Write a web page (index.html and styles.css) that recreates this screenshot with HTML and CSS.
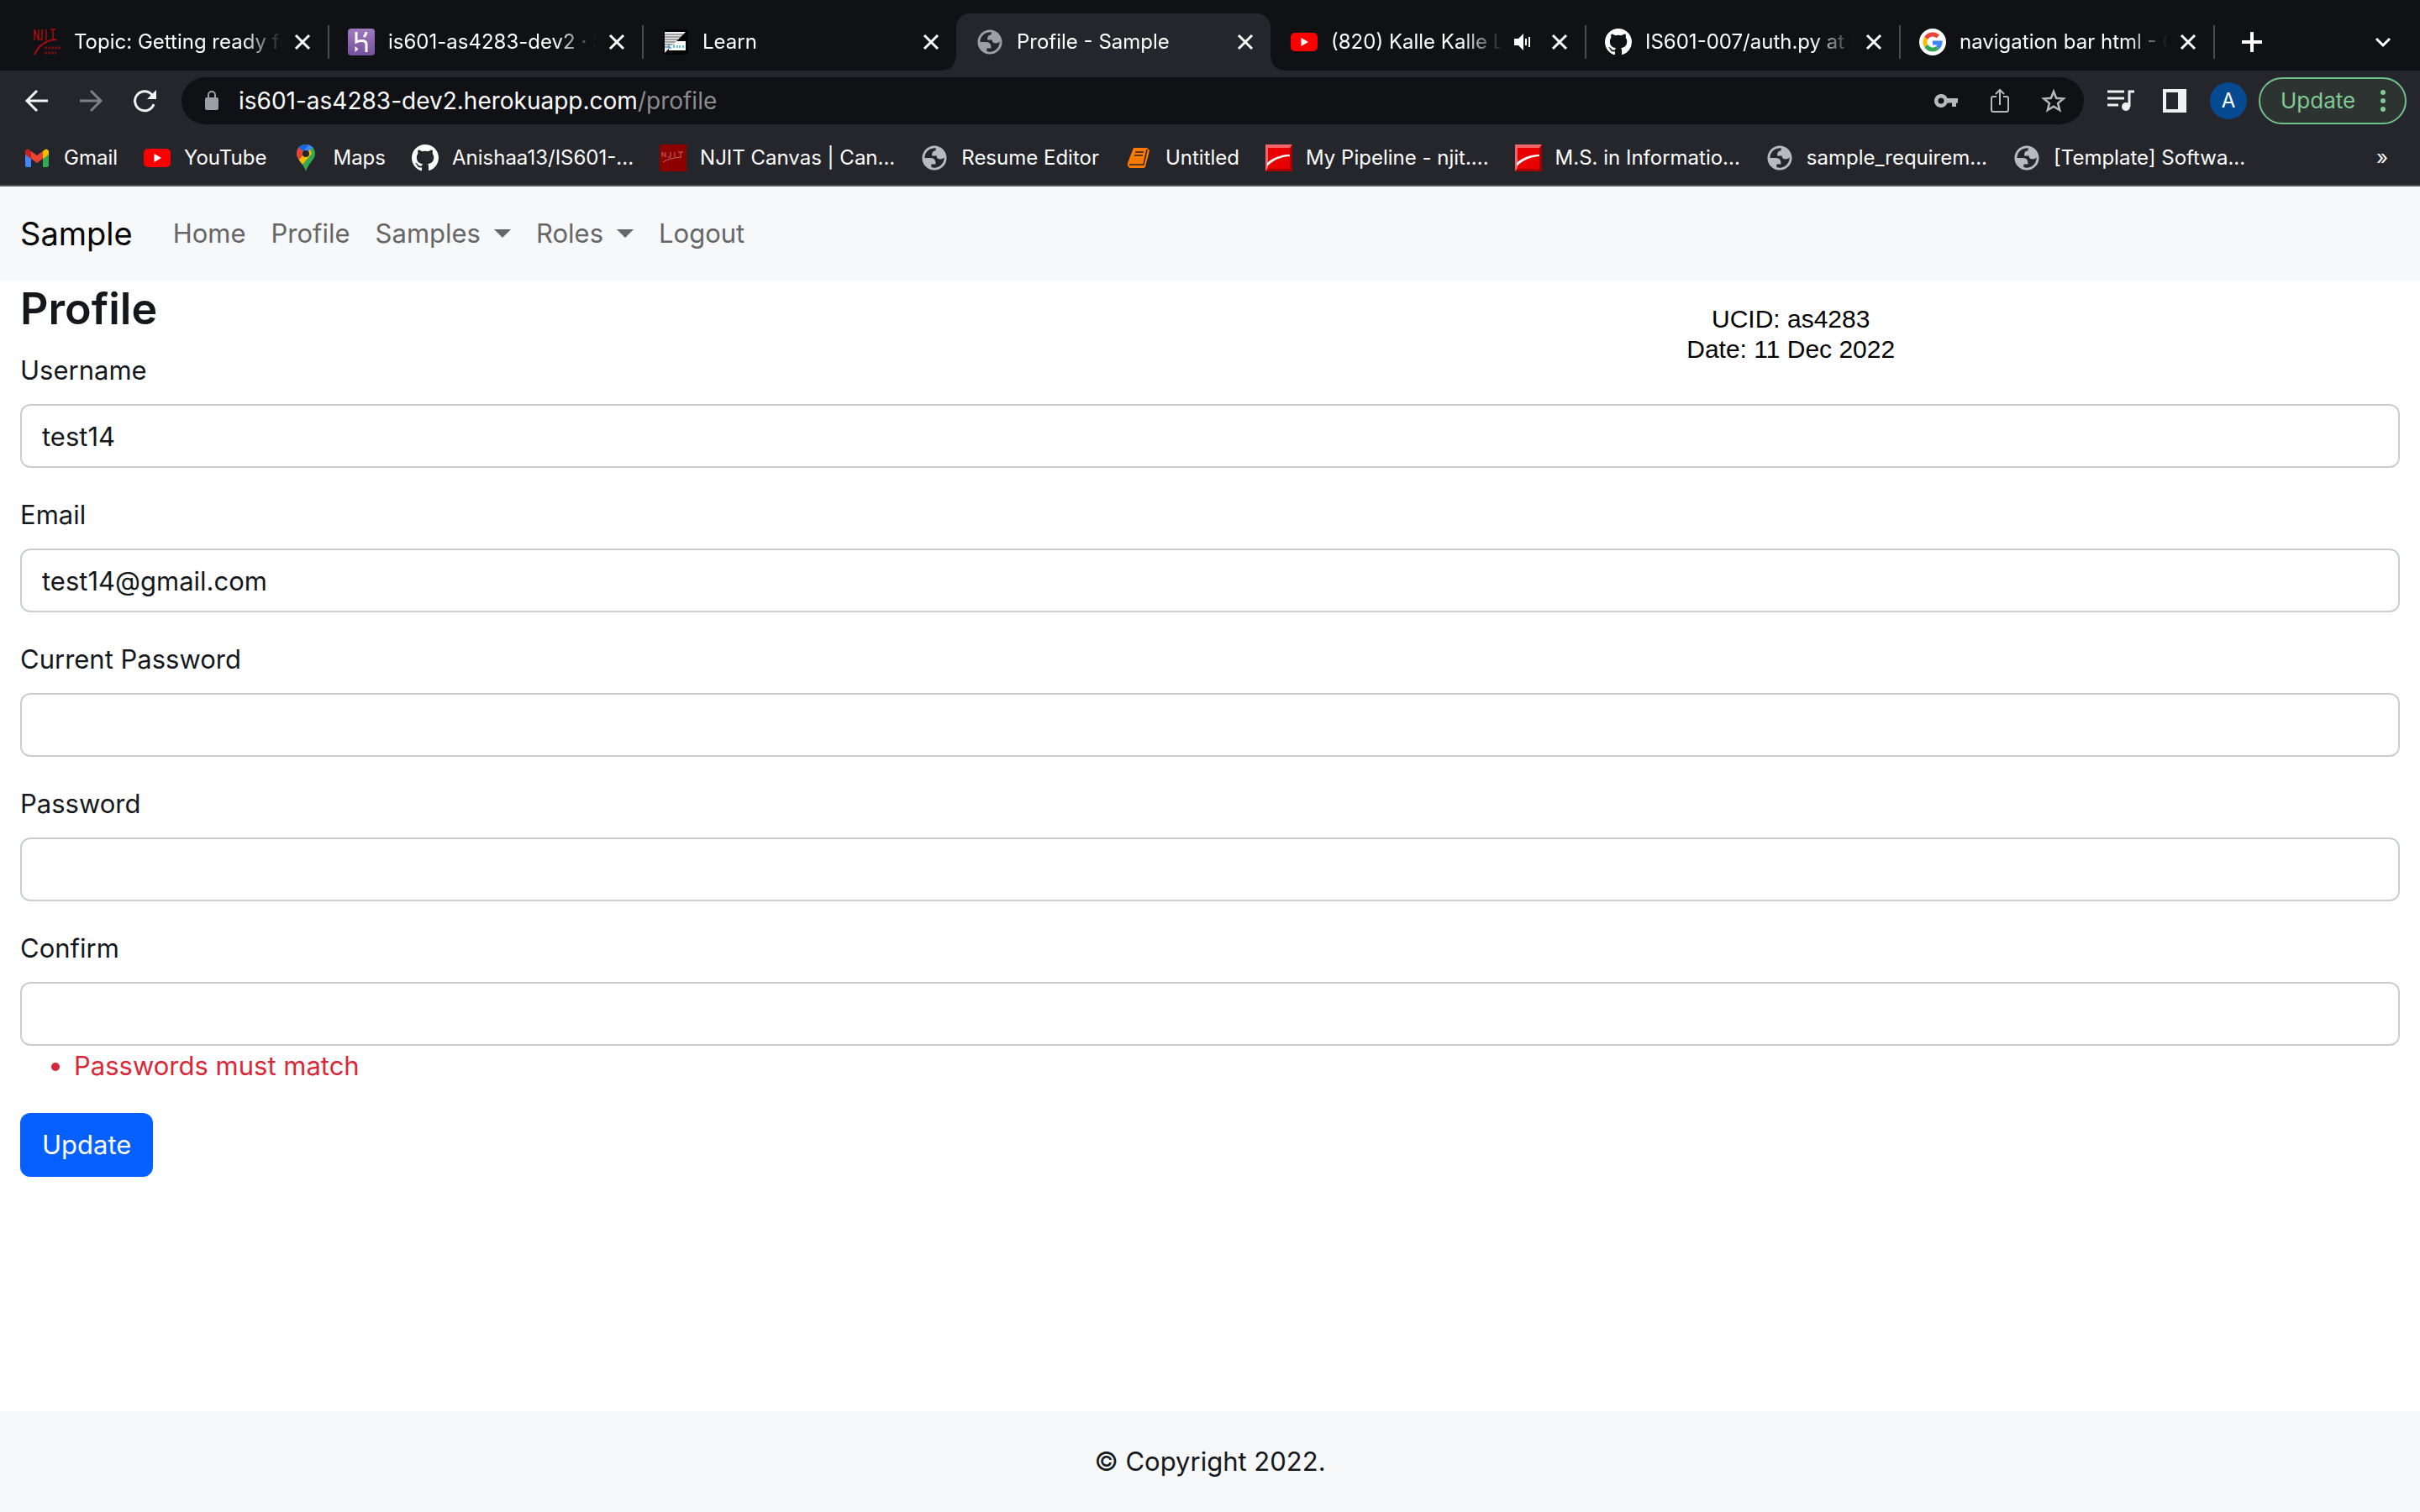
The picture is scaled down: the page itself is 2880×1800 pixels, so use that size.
FILE: index.html
```html
<!DOCTYPE html>
<html lang="en">
<head>
<meta charset="utf-8">
<title>Profile - Sample</title>
<link rel="stylesheet" href="styles.css">
</head>
<body>
<svg class="defs" aria-hidden="true">
  <symbol id="x" viewBox="0 0 32 32"><path d="M8 8l16 16M24 8L8 24" stroke="currentColor" stroke-width="3" fill="none"/></symbol>
  <symbol id="globe" viewBox="1 1 22 22"><path fill="currentColor" fill-rule="evenodd" d="M12 2C6.480 2 2 6.480 2 12s4.480 10 10 10 10-4.480 10-10S17.520 2 12 2zM4 12h4.400c3.407.022 4.922 1.730 4.543 5.127H9.488v2.470a8.004 8.004 0 0 0 10.498-8.083C19.327 12.504 18.332 13 17 13c-2.137 0-3.206-.916-3.206-2.750h-3.748c-.274-2.728.683-4.092 2.870-4.092 0-.975.327-1.597.811-1.970A8 8 0 0 0 4 12z"/></symbol>
  <symbol id="github" viewBox="0 0 16 16"><path fill="#fff" d="M8 0C3.58 0 0 3.58 0 8c0 3.54 2.29 6.53 5.47 7.59.4.07.55-.17.55-.38v-1.49c-2.01.37-2.53-.49-2.69-.94-.09-.23-.48-.94-.82-1.13-.28-.15-.68-.52-.01-.53.63-.01 1.08.58 1.23.82.72 1.21 1.87.87 2.33.66.07-.52.28-.87.51-1.07-1.78-.2-3.64-.89-3.64-3.95 0-.87.31-1.59.82-2.15-.08-.2-.36-1.02.08-2.12 0 0 .67-.21 2.2.82a7.6 7.6 0 014 0c1.53-1.04 2.2-.82 2.2-.82.44 1.1.16 1.92.08 2.12.51.56.82 1.27.82 2.15 0 3.07-1.87 3.75-3.65 3.95.29.25.54.73.54 1.48v2.14c0 .21.15.46.55.38A8 8 0 0016 8c0-4.42-3.58-8-8-8z"/></symbol>
  <symbol id="youtube" viewBox="0 0 32 32"><rect y="5" width="32" height="22" rx="5" fill="#f00"/><path d="M12.500 11v10l8.500-5z" fill="#fff"/></symbol>
  <symbol id="ribbon" viewBox="0 0 32 32"><path d="M0 0h32v32H0z" fill="#e80000"/><path d="M0 0h32l-2 4H3v24l-3 4z" fill="#f0666a"/><path d="M32 0v32H0l3-3h26V4z" fill="#a80000"/><path d="M2 22C8 16 18 12 29 12v2C18 15 10 18 2 26z" fill="#fff"/></symbol>
</svg>

<header class="browser">
  <div class="tabs">
    <div class="tab">
      <svg class="icon" viewBox="0 0 32 32" fill="none" stroke="#a80c10"><path d="M1 14V1l5 13V1M10 1v11c0 2-2 2-2 0M15 1v13M20 1h6M23 1v13" stroke-width="1.500"/><path d="M1 31C5 22 13 14 27 13" stroke-width="2"/><path d="M13 23h19M13 29h14" stroke-width="3" stroke-dasharray="3 1" opacity=".6"/></svg>
      <span class="tab-title">Topic: Getting ready for</span>
      <button class="tab-close" aria-label="Close tab"><svg class="icon"><use href="#x"/></svg></button>
    </div>
    <div class="tab">
      <svg class="icon" viewBox="0 0 32 32"><defs><linearGradient id="hk" x2="0" y2="1"><stop stop-color="#a07abf"/><stop offset="1" stop-color="#76519c"/></linearGradient></defs><rect width="32" height="32" rx="4" fill="url(#hk)"/><path d="M10 4v12c4-2 12-3 12 3v9M22 4c0 3-1 4-3 6" fill="none" stroke="#fff" stroke-width="3"/><path d="M8.500 21v7l4-3.500z" fill="#fff"/></svg>
      <span class="tab-title">is601-as4283-dev2 · S</span>
      <button class="tab-close" aria-label="Close tab"><svg class="icon"><use href="#x"/></svg></button>
    </div>
    <div class="tab">
      <svg class="icon" viewBox="0 0 32 32"><path d="M1 1h30v30H1z" fill="#050506"/><path d="M3 4h25L3 29z" fill="#eee"/><path d="M3 7h22M3 10h20M3 13h17M3 16h13M3 19h10M3 22h7" stroke="#555"/><path d="M17 15h11v11H8v-3z" fill="#fff"/><path d="M8 18v5h3M14 19v4M18 20v3M21 20v3M25 20v3" stroke="#32a6dc" stroke-width="1.500" fill="none"/></svg>
      <span class="tab-title">Learn</span>
      <button class="tab-close" aria-label="Close tab"><svg class="icon"><use href="#x"/></svg></button>
    </div>
    <div class="tab active">
      <svg class="icon"><use href="#globe"/></svg>
      <span class="tab-title">Profile - Sample</span>
      <button class="tab-close" aria-label="Close tab"><svg class="icon"><use href="#x"/></svg></button>
    </div>
    <div class="tab">
      <svg class="icon"><use href="#youtube"/></svg>
      <span class="tab-title">(820) Kalle Kalle L</span>
      <svg class="icon sound" viewBox="0 0 32 32"><path d="M6 12h5l6-6v20l-6-6H6z" fill="#fff"/><path d="M20 12v8M24 10v12" stroke="#fff" stroke-width="2"/></svg>
      <button class="tab-close" aria-label="Close tab"><svg class="icon"><use href="#x"/></svg></button>
    </div>
    <div class="tab">
      <svg class="icon"><use href="#github"/></svg>
      <span class="tab-title">IS601-007/auth.py at M</span>
      <button class="tab-close" aria-label="Close tab"><svg class="icon"><use href="#x"/></svg></button>
    </div>
    <div class="tab">
      <svg class="icon" viewBox="0 0 32 32" fill="none" stroke-width="5"><circle cx="16" cy="16" r="16" fill="#fff"/><path d="M8.200 11.500A9 9 0 0 1 22.400 9.600" stroke="#ea4335"/><path d="M8.200 11.500a9 9 0 0 0 0 9" stroke="#fbbc05"/><path d="M8.200 20.500A9 9 0 0 0 21.800 22.900" stroke="#34a853"/><path d="M21.800 22.900A9 9 0 0 0 25 17H16" stroke="#4285f4"/></svg>
      <span class="tab-title">navigation bar html - G</span>
      <button class="tab-close" aria-label="Close tab"><svg class="icon"><use href="#x"/></svg></button>
    </div>
    <button class="tab-new" aria-label="New tab"><svg class="icon" viewBox="0 0 32 32"><path d="M16 4v24M4 16h24" stroke="#fff" stroke-width="4"/></svg></button>
    <button class="tab-list" aria-label="Search tabs"><svg class="icon" viewBox="0 0 32 32"><path d="M8 12l8 8 8-8" fill="none" stroke="#fff" stroke-width="3"/></svg></button>
  </div>

  <div class="toolbar">
    <div class="nav-buttons">
      <button aria-label="Back"><svg class="icon" viewBox="0 0 32 32"><path d="M29 16H5M16 4L4 16l12 12" fill="none" stroke="#f1f3f4" stroke-width="3"/></svg></button>
      <button aria-label="Forward"><svg class="icon" viewBox="0 0 32 32"><path d="M3 16h24M16 4l12 12-12 12" fill="none" stroke="#7d7f83" stroke-width="3"/></svg></button>
      <button aria-label="Reload"><svg class="icon" viewBox="0 0 32 32"><path d="M25 9A11.500 11.500 0 1 0 27 20" fill="none" stroke="#f1f3f4" stroke-width="3"/><path d="M30 3v11H19z" fill="#f1f3f4"/></svg></button>
    </div>
    <div class="omnibox">
      <svg class="icon" viewBox="0 0 32 32"><rect x="8" y="12" width="16" height="15" rx="2" fill="#9aa0a6"/><path d="M12 13V9a4 4 0 0 1 8 0v4" fill="none" stroke="#9aa0a6" stroke-width="2"/></svg>
      <div class="url" role="textbox" aria-label="Address">is601-as4283-dev2.herokuapp.com<span class="url-path">/profile</span></div>
      <button aria-label="Passwords"><svg class="icon" viewBox="0 0 32 32"><path d="M10 8a8 8 0 1 0 7.500 10.500H23V23h5v-4.500h2V13H17.500A8 8 0 0 0 10 8zm0 4.500a3.500 3.500 0 1 1 0 7 3.500 3.500 0 0 1 0-7z" fill="#b8b9ba"/></svg></button>
      <button aria-label="Share"><svg class="icon" viewBox="0 0 32 32"><path d="M12 11H8q-2 0-2 2v14q0 2 2 2h16q2 0 2-2V13q0-2-2-2h-4M16 21V4M11 8l5-5 5 5" fill="none" stroke="#b8b9ba" stroke-width="2"/></svg></button>
      <button aria-label="Bookmark this page"><svg class="icon" viewBox="0 0 32 32"><path d="M16 5l3.100 7.800 8.600.7-6.600 5.400 2.100 8.300L16 22.800l-7.200 4.400 2.100-8.300-6.600-5.400 8.600-.7z" fill="none" stroke="#b8b9ba" stroke-width="2.500"/></svg></button>
    </div>
    <div class="actions">
      <button aria-label="Media controls"><svg class="icon" viewBox="0 0 32 32" stroke="#eef0f2" stroke-width="3" fill="none"><path d="M0 5h20M0 13h20M0 21h13"/><path d="M32 5h-6v18"/><circle cx="22" cy="23" r="5" fill="#eef0f2" stroke="none"/></svg></button>
      <button aria-label="Side panel"><svg class="icon" viewBox="0 0 32 32"><path d="M2 2h28v28H2zM6 6v20h14V6z" fill="#eef0f2" fill-rule="evenodd"/></svg></button>
      <button class="avatar" aria-label="Account">A</button>
    </div>
    <button class="update">Update<svg class="icon" viewBox="0 0 32 32" fill="#81c995"><circle cx="16" cy="6" r="3"/><circle cx="16" cy="16" r="3"/><circle cx="16" cy="26" r="3"/></svg></button>
  </div>

  <nav class="bookmarks" aria-label="Bookmarks">
    <a href="#"><svg class="icon" viewBox="0 0 32 32"><path d="M2 7v18q0 2 2 2h5V14z" fill="#4285f4"/><path d="M30 7v18q0 2-2 2h-5V14z" fill="#34a853"/><path d="M23 8v9l7-5V8q-2-5-7 0z" fill="#fbbc04"/><path d="M2 8v4l7 5V8Q4 3 2 8z" fill="#c5221f"/><path d="M9 8v9l7 5 7-5V8l-7 5z" fill="#ea4335"/></svg>Gmail</a>
    <a href="#"><svg class="icon"><use href="#youtube"/></svg>YouTube</a>
    <a href="#"><svg class="icon" viewBox="0 0 32 32"><defs><clipPath id="pin"><path d="M16 0C9 0 5 5 5 11c0 7 8 11 11 21 3-10 11-14 11-21C27 5 23 0 16 0z"/></clipPath></defs><g clip-path="url(#pin)"><path d="M0 0h32v32H0z" fill="#34a853"/><path d="M4 21L20 1l3 10L9 27z" fill="#fbbc04"/><path d="M0 0h8l8 9-9 10H0z" fill="#ea4335"/><path d="M7 3l9 8 10-9V0H7z" fill="#4285f4"/><path d="M7 3l6 5 7-8H8z" fill="#1a66d8"/></g><circle cx="16" cy="11" r="4" fill="#25262b"/></svg>Maps</a>
    <a href="#"><svg class="icon"><use href="#github"/></svg>Anishaa13/IS601-...</a>
    <a href="#"><svg class="icon" viewBox="0 0 32 32"><path d="M0 0h32v32H0z" fill="#8c0000"/><path d="M3 15V9l4 6V9M13 9v6h-3M18 9v6M22 9h6M25 9v6M4 21q7-5 22-6" fill="none" stroke="#b96b6b"/></svg>NJIT Canvas | Can...</a>
    <a href="#"><svg class="icon"><use href="#globe"/></svg>Resume Editor</a>
    <a href="#"><svg class="icon" viewBox="0 0 32 32"><path d="M10 4h16l3 3-5 20-2 1H6q-4-2-3-6z" fill="#ff7a00"/><path d="M12 9h10M11 13h10M5 24h17l4-18" fill="none" stroke="#25262b" stroke-width="1.500"/></svg>Untitled</a>
    <a href="#"><svg class="icon"><use href="#ribbon"/></svg>My Pipeline - njit....</a>
    <a href="#"><svg class="icon"><use href="#ribbon"/></svg>M.S. in Informatio...</a>
    <a href="#"><svg class="icon"><use href="#globe"/></svg>sample_requirem...</a>
    <a href="#"><svg class="icon"><use href="#globe"/></svg>[Template] Softwa...</a>
    <button class="more" aria-label="More bookmarks">»</button>
  </nav>
</header>

<nav class="navbar">
  <a class="brand" href="#">Sample</a>
  <a href="#">Home</a>
  <a href="#">Profile</a>
  <a class="dropdown" href="#">Samples</a>
  <a class="dropdown" href="#">Roles</a>
  <a href="#">Logout</a>
</nav>

<main class="content">
  <p class="note">UCID: as4283<br>Date: 11 Dec 2022</p>
  <h1>Profile</h1>
  <form>
    <div class="field"><label for="username">Username</label><input id="username" type="text" value="test14"></div>
    <div class="field"><label for="email">Email</label><input id="email" type="email" value="test14@gmail.com"></div>
    <div class="field"><label for="current">Current Password</label><input id="current" type="password"></div>
    <div class="field"><label for="password">Password</label><input id="password" type="password"></div>
    <div class="field"><label for="confirm">Confirm</label><input id="confirm" type="password">
      <ul class="errors"><li>Passwords must match</li></ul></div>
    <button class="submit" type="submit">Update</button>
  </form>
</main>

<footer class="footer">© Copyright 2022.</footer>
</body>
</html>
```
FILE: styles.css
```css
* { box-sizing: border-box; }

body {
  margin: 0;
  min-height: 100vh;
  display: flex;
  flex-direction: column;
  background: #fff;
  color: #14181d;
  font-family: Inter, "Liberation Sans", sans-serif;
  font-size: 31px;
  line-height: 48px;
}

button, input { font: inherit; color: inherit; }
button { border: 0; padding: 0; background: none; }
a { color: inherit; text-decoration: none; }

.defs { position: absolute; width: 0; height: 0; }
.icon { display: block; width: 32px; height: 32px; flex: none; }

/* Browser window */
.browser {
  background: #25262b;
  border-bottom: 2px solid #525257;
  color: #fff;
  font-size: 24px;
  line-height: 32px;
}

.tabs {
  display: flex;
  align-items: stretch;
  height: 84px;
  padding: 16px 28px 0 16px;
  background: #101115;
}

.tab {
  display: flex;
  align-items: center;
  flex: 0 1 374px;
  min-width: 0;
  padding: 0 14px 0 24px;
  position: relative;
}

.tab::after {
  content: "";
  position: absolute;
  right: -2px;
  top: 14px;
  width: 2px;
  height: 40px;
  background: #4a4b4f;
}

.tab.active::after, .tab:has(+ .active)::after { display: none; }

.tab.active {
  background: #25262b;
  border-radius: 16px 16px 0 0;
}

.tab.active::before {
  content: "";
  position: absolute;
  left: -16px;
  right: -16px;
  bottom: 0;
  height: 16px;
  background:
    radial-gradient(circle at 0 0, #101115 15px, #25262b 16px) left / 16px 16px no-repeat,
    radial-gradient(circle at 100% 0, #101115 15px, #25262b 16px) right / 16px 16px no-repeat;
}

.tab.active > .icon { color: #9aa0a6; }

.tab-title {
  flex: 1;
  min-width: 0;
  margin: 0 8px 0 16px;
  overflow: hidden;
  white-space: nowrap;
  mask-image: linear-gradient(to left, transparent, #000 48px);
}

.sound { margin-right: 12px; }
.tab-new { margin-left: 30px; }
.tab-list { margin-left: auto; }

.toolbar {
  display: flex;
  align-items: center;
  height: 64px;
  padding: 8px 16px 0 28px;
}

.nav-buttons { display: flex; gap: 32px; margin-right: 28px; }

.omnibox {
  display: flex;
  align-items: center;
  gap: 32px;
  flex: 1;
  height: 56px;
  padding: 0 20px;
  border-radius: 28px;
  background: #101115;
  font-size: 28px;
}

.url { flex: 1; margin-left: -16px; }
.url-path { color: #8b8c8e; }

.actions { display: flex; align-items: center; gap: 32px; margin: 0 14px 0 28px; }

.avatar {
  width: 44px;
  height: 44px;
  margin-left: -6px;
  border-radius: 50%;
  background: #064a92;
  font-size: 24px;
}

.update {
  display: flex;
  align-items: center;
  justify-content: space-between;
  width: 176px;
  height: 56px;
  padding: 0 10px 0 24px;
  border: 2px solid #6fc18a;
  border-radius: 28px;
  background: #2d3331;
  color: #81c995;
  font-size: 26px;
}

.bookmarks {
  display: flex;
  align-items: center;
  gap: 31px;
  height: 72px;
  padding: 8px 38px 0 28px;
  white-space: nowrap;
}

.bookmarks a { display: flex; align-items: center; gap: 16px; }
.bookmarks .icon { color: #b7bbc0; }
.more { margin-left: auto; }

/* Site navigation */
.navbar {
  display: flex;
  align-items: center;
  gap: 30px;
  padding: 32px 24px;
  background: #f7f8fa;
  color: #656668;
}

.brand { margin-right: 18px; color: #060607; font-size: 38px; }

.dropdown { display: flex; align-items: center; gap: 16px; }
.dropdown::after {
  content: "";
  border: 10px solid transparent;
  border-top-color: currentColor;
  border-bottom: 0;
}

/* Profile form */
.content { position: relative; padding: 0 24px; }

h1 { margin: 0 0 16px; font-size: 52px; font-weight: 600; line-height: 67px; }

.note {
  position: absolute;
  left: 74%;
  top: 28px;
  margin: 0;
  transform: translateX(-50%);
  color: #000;
  font-family: "Liberation Sans", Arial, sans-serif;
  font-size: 30px;
  line-height: 36px;
  text-align: center;
}

.field { margin-bottom: 32px; }
.field label { display: block; margin-bottom: 16px; }

.field input {
  display: block;
  width: 100%;
  height: 76px;
  padding: 12px 24px;
  border: 2px solid #c9ced5;
  border-radius: 12px;
  background: #fff;
}

.errors { margin: 0; padding-left: 64px; color: #da2737; }

.submit {
  height: 76px;
  padding: 12px 26px;
  border-radius: 12px;
  background: #0560ff;
  color: #fff;
}

.footer {
  margin-top: auto;
  padding: 36px 24px;
  background: #f7f8fa;
  text-align: center;
}
```
